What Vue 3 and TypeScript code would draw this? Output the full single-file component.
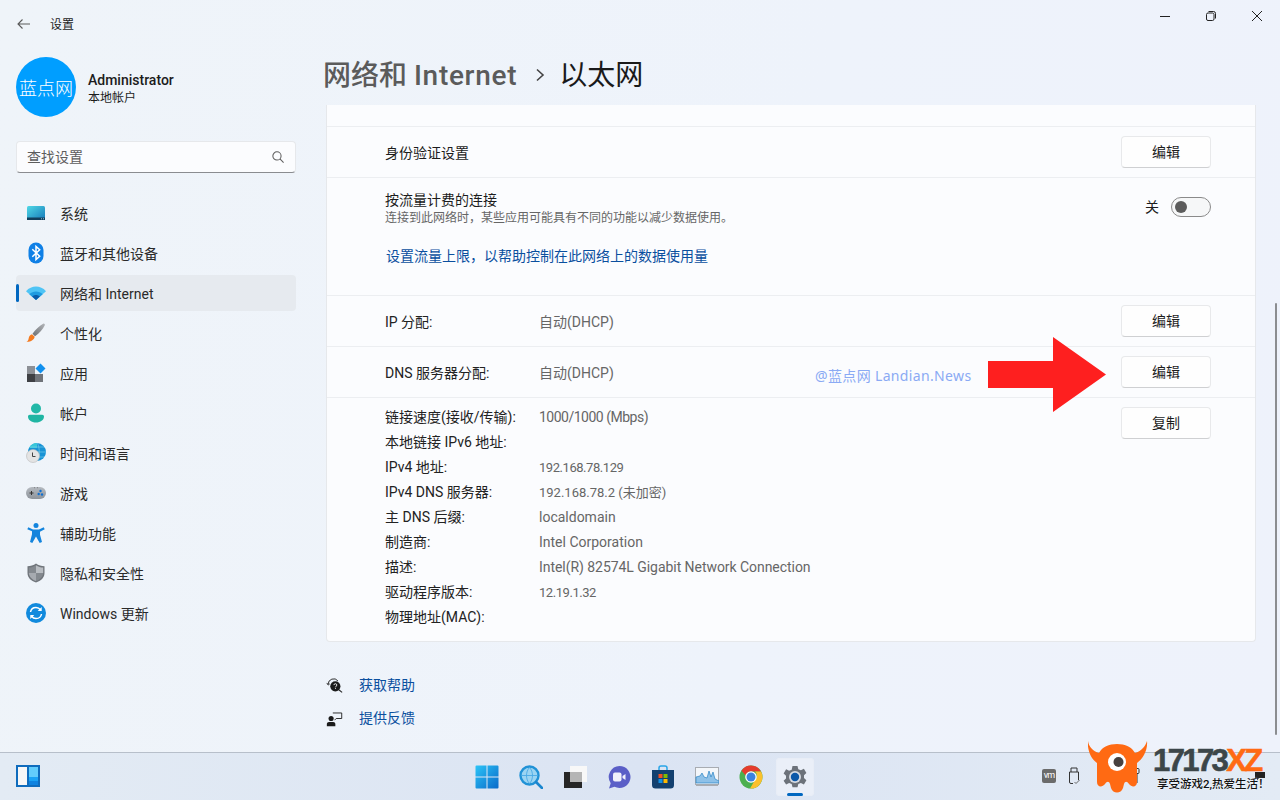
<script setup lang="ts">
const navItems = [
  { key: 'system', label: '系统' },
  { key: 'bluetooth', label: '蓝牙和其他设备' },
  { key: 'network', label: '网络和 Internet', active: true },
  { key: 'brush', label: '个性化' },
  { key: 'apps', label: '应用' },
  { key: 'account', label: '帐户' },
  { key: 'time', label: '时间和语言' },
  { key: 'game', label: '游戏' },
  { key: 'access', label: '辅助功能' },
  { key: 'privacy', label: '隐私和安全性' },
  { key: 'update', label: 'Windows 更新' },
]

const details = [
  { label: '链接速度(接收/传输):', value: '1000/1000 (Mbps)', fit: 'fit-wide' },
  { label: '本地链接 IPv6 地址:', value: '', fit: '' },
  { label: 'IPv4 地址:', value: '192.168.78.129', fit: 'fit-num' },
  { label: 'IPv4 DNS 服务器:', value: '192.168.78.2 (未加密)', fit: 'fit-small' },
  { label: '主 DNS 后缀:', value: 'localdomain', fit: '' },
  { label: '制造商:', value: 'Intel Corporation', fit: '' },
  { label: '描述:', value: 'Intel(R) 82574L Gigabit Network Connection', fit: 'fit-long' },
  { label: '驱动程序版本:', value: '12.19.1.32', fit: 'fit-num' },
  { label: '物理地址(MAC):', value: '', fit: '' },
]
</script>

<template>
  <div class="screen">
    <div class="window">
      <aside class="sidebar">
        <div class="apptitle">
          <svg class="back" width="16" height="16" viewBox="0 0 16 16" fill="none" stroke="#5a5a5a" stroke-width="1.1">
            <path d="M14 8H2.500M6.500 3.500L2 8l4.500 4.500" />
          </svg>
          <span class="apptitle-text">设置</span>
        </div>
        <div class="profile">
          <div class="avatar">蓝点网</div>
          <div class="who">
            <div class="name">Administrator</div>
            <div class="acct">本地帐户</div>
          </div>
        </div>
        <div class="search">
          <span class="search-text">查找设置</span>
          <svg width="12" height="12" viewBox="0 0 14 14" fill="none" stroke="#5c5c5c" stroke-width="1.200">
            <circle cx="5.800" cy="5.800" r="4.800" />
            <path d="M9.300 9.300L13.500 13.500" />
          </svg>
        </div>
        <nav class="nav">
          <div v-for="item in navItems" :key="item.key" class="navitem" :class="{ active: item.active }">
            <span class="navicon">
              <svg v-if="item.key === 'system'" width="20" height="20" viewBox="0 0 20 20">
                <defs>
                  <linearGradient id="sys" x1="0" y1="0" x2="1" y2="1">
                    <stop offset="0" stop-color="#4fd8e6" />
                    <stop offset="1" stop-color="#1679b9" />
                  </linearGradient>
                </defs>
                <rect x="1" y="3" width="18" height="14" rx="1.500" fill="url(#sys)" />
                <rect x="1" y="14.500" width="18" height="2.500" fill="#123f5c" />
                <rect x="15" y="15.300" width="1" height="1" fill="#8fc3dc" />
                <rect x="17" y="15.300" width="1" height="1" fill="#8fc3dc" />
              </svg>
              <svg v-else-if="item.key === 'bluetooth'" width="20" height="22" viewBox="0 0 20 22">
                <rect x="2.500" y="0.500" width="15" height="21" rx="7.500" fill="#0f80e6" />
                <path d="M6.300 7.300l7.400 6.900-3.700 3.400V4.400l3.700 3.400-7.400 6.900" fill="none" stroke="#fff" stroke-width="1.500" />
              </svg>
              <svg v-else-if="item.key === 'network'" width="20" height="14" viewBox="0 0 20 14">
                <path d="M0 5.200C5.500-1 14.500-1 20 5.200L10 14z" fill="#4fc4f5" />
                <path d="M3.300 8.200C7 4.500 13 4.500 16.700 8.200L10 14z" fill="#1f9be0" />
                <path d="M6.200 10.500c2.200-2 5.400-2 7.600 0L10 14z" fill="#0b5ba8" />
              </svg>
              <svg v-else-if="item.key === 'brush'" width="20" height="20" viewBox="0 0 20 20">
                <defs>
                  <linearGradient id="br" x1="0" y1="1" x2="1" y2="0">
                    <stop offset="0" stop-color="#6c6f73" />
                    <stop offset="1" stop-color="#b3b6ba" />
                  </linearGradient>
                </defs>
                <path d="M17.500 0.500c1 0 1.700.9 1.300 1.800C17 6.500 13 10.500 9 13.200L6.500 10.800C9.300 6.800 13.500 2.500 17.500.5z" fill="url(#br)" />
                <path d="M6 11.200l2.700 2.600c-.4 3-3.800 5.200-8.200 5 2-1 1.900-2.300 2.300-4 .4-1.800 1.600-3.200 3.200-3.600z" fill="#f47b20" />
              </svg>
              <svg v-else-if="item.key === 'apps'" width="20" height="20" viewBox="0 0 20 20">
                <rect x="1" y="3" width="8" height="8" fill="#8c9096" />
                <rect x="1" y="11" width="8" height="8" fill="#3e4044" />
                <rect x="9" y="11" width="8" height="8" fill="#70747a" />
                <path d="M14.500 0.500L19.500 5.500 14.500 10.500 9.500 5.500z" fill="#1190ee" />
              </svg>
              <svg v-else-if="item.key === 'account'" width="20" height="20" viewBox="0 0 20 20">
                <circle cx="10" cy="5.500" r="5" fill="#22b8a8" />
                <path d="M2 13.500c0-1 .8-1.800 1.800-1.800h12.400c1 0 1.800.8 1.800 1.800 0 3.500-3.600 6-8 6s-8-2.500-8-6z" fill="#1fb5a3" />
              </svg>
              <svg v-else-if="item.key === 'time'" width="20" height="20" viewBox="0 0 20 20">
                <circle cx="11" cy="9" r="9" fill="#1993d5" />
                <path d="M11 0a9 9 0 0 0-8 5h8z" fill="#38c6d8" />
                <path d="M11 0c3 3 3 15 0 18M2 9h18M4 4h14M4 14h14" fill="none" stroke="#7fd3ee" stroke-width=".6" />
                <circle cx="7" cy="13" r="6.500" fill="#e4e4e4" stroke="#b9b9b9" stroke-width=".6" />
                <path d="M6.500 9.500v4h3" fill="none" stroke="#444" stroke-width="1" />
              </svg>
              <svg v-else-if="item.key === 'game'" width="20" height="14" viewBox="0 0 20 14">
                <defs>
                  <linearGradient id="gm" x1="0" y1="0" x2="0" y2="1">
                    <stop offset="0" stop-color="#b5bac0" />
                    <stop offset="1" stop-color="#8e949b" />
                  </linearGradient>
                </defs>
                <rect x="0" y="1" width="20" height="12" rx="6" fill="url(#gm)" />
                <path d="M3.500 7h4M5.500 5v4" stroke="#333" stroke-width="1" />
                <circle cx="14.500" cy="5" r="1.200" fill="#0f6fd0" />
                <circle cx="12.700" cy="8" r="1.200" fill="#0f6fd0" />
                <circle cx="16" cy="8.500" r="1.200" fill="#0f6fd0" />
                <path d="M8 1.700h.8M11 1.700h.8" stroke="#555" stroke-width=".7" />
              </svg>
              <svg v-else-if="item.key === 'access'" width="18" height="20" viewBox="0 0 18 20">
                <circle cx="9" cy="2.500" r="2.500" fill="#1384dd" />
                <path d="M1.300 4.300L6 6.500h6l4.700-2.200 1 2-4.700 2.500v3L15 19l-2.300.9L9 13.500 5.300 19.900 3 19l2-7.700v-3L.3 6.300z" fill="#1384dd" />
              </svg>
              <svg v-else-if="item.key === 'privacy'" width="20" height="20" viewBox="0 0 20 20">
                <path d="M10 .5C12.500 2.500 15.500 3.200 18.500 3.200V10c0 4.500-3.500 8-8.500 9.500C5 18 1.500 14.500 1.500 10V3.200C4.500 3.200 7.500 2.500 10 .5z" fill="#70757b" />
                <path d="M10 2.200c2.300 1.700 4.700 2.300 7.200 2.400V10H10z" fill="#b9bdc2" />
                <path d="M10 10H2.800c.2 3.700 3 6.500 7.200 8z" fill="#a6aab0" />
                <path d="M10 2.200c-2.300 1.700-4.700 2.300-7.200 2.400V10H10zM10 10h7.200c-.2 3.700-3 6.500-7.200 8z" fill="#84898f" />
              </svg>
              <svg v-else width="20" height="20" viewBox="0 0 20 20">
                <circle cx="10" cy="10" r="10" fill="#118add" />
                <path d="M4.500 9C5 6 7.500 4.500 10 4.500c2 0 3.500 1 4.400 2.300M15.500 11c-.5 3-3 4.500-5.500 4.500-2 0-3.500-1-4.400-2.300" fill="none" stroke="#fff" stroke-width="1.500" />
                <path d="M15.700 4v4h-4zM4.300 16v-4h4z" fill="#fff" />
              </svg>
            </span>
            <span class="navlabel">{{ item.label }}</span>
          </div>
        </nav>
      </aside>

      <main class="main">
        <div class="caption">
          <span class="capbtn">
            <svg width="12" height="12" viewBox="0 0 12 12" stroke="#222" fill="none"><path d="M1 6.500h10" /></svg>
          </span>
          <span class="capbtn">
            <svg width="12" height="12" viewBox="0 0 12 12" stroke="#222" fill="none"><rect x="1.500" y="3" width="7.500" height="7.500" rx="1.500" /><path d="M3.500 1.500h5a2 2 0 0 1 2 2v5" /></svg>
          </span>
          <span class="capbtn">
            <svg width="12" height="12" viewBox="0 0 12 12" stroke="#222" fill="none"><path d="M1 1l10 10M11 1L1 11" /></svg>
          </span>
        </div>
        <h1 class="crumb">
          <span class="crumb-parent">网络和 <span class="crumb-en">Internet</span></span>
          <svg class="crumb-sep" width="10" height="14" viewBox="0 0 10 14" fill="none" stroke="#444" stroke-width="1.600"><path d="M2 1.500l6 5.500-6 5.500" /></svg>
          <span class="crumb-current">以太网</span>
        </h1>

        <section class="card">
          <div class="row row-top"></div>
          <div class="row row-line">
            <span class="title">身份验证设置</span>
            <button class="btn">编辑</button>
          </div>
          <div class="row row-meter">
            <div class="meter-text">
              <div class="title">按流量计费的连接</div>
              <div class="sub">连接到此网络时，某些应用可能具有不同的功能以减少数据使用。</div>
              <a class="link limit">设置流量上限，以帮助控制在此网络上的数据使用量</a>
            </div>
            <div class="toggle-wrap">
              <span class="title">关</span>
              <span class="toggle"><i></i></span>
            </div>
          </div>
          <div class="row row-line">
            <span class="pair"><span class="label">IP 分配:</span><span class="value">自动(DHCP)</span></span>
            <button class="btn">编辑</button>
          </div>
          <div class="row row-line">
            <span class="pair"><span class="label">DNS 服务器分配:</span><span class="value">自动(DHCP)</span></span>
            <button class="btn">编辑</button>
          </div>
          <div class="row row-details">
            <div class="details">
              <div v-for="d in details" :key="d.label" class="detail">
                <span class="label">{{ d.label }}</span><span class="value" :class="d.fit">{{ d.value }}</span>
              </div>
            </div>
            <button class="btn">复制</button>
          </div>
        </section>

        <div class="help">
          <div class="helpline">
            <svg width="17" height="17" viewBox="0 0 20 20">
              <path d="M2.500 8.500A6.500 6.500 0 0 1 14 4.500" fill="none" stroke="#222" stroke-width="1.100" />
              <path d="M1 7l1.500 2.500L4.500 8" fill="none" stroke="#222" stroke-width="1" />
              <circle cx="11" cy="11" r="6" fill="#1b1b1b" />
              <path d="M15 15l4 3" stroke="#222" stroke-width="1.200" />
              <path d="M9.300 9.500c0-2.200 3.500-2.200 3.500 0 0 1.300-1.700 1.300-1.700 2.700" fill="none" stroke="#fff" stroke-width="1" />
              <rect x="10.600" y="13" width="1" height="1" fill="#fff" />
            </svg>
            <a class="link">获取帮助</a>
          </div>
          <div class="helpline">
            <svg width="17" height="17" viewBox="0 0 20 20">
              <circle cx="6" cy="10" r="3" fill="#1b1b1b" />
              <path d="M1 19v-2.500C1 15 2.200 14 3.500 14h5c1.300 0 2.500 1 2.500 2.500V19z" fill="#1b1b1b" />
              <path d="M8 3.500h10.500V10H12l-2 2" fill="none" stroke="#222" stroke-width="1.100" />
            </svg>
            <a class="link">提供反馈</a>
          </div>
        </div>
      </main>
    </div>

    <footer class="taskbar">
      <div class="widget">
        <svg width="24" height="22" viewBox="0 0 24 22">
          <rect width="24" height="22" fill="#0f6cbd" />
          <rect x="2" y="2" width="9" height="18" fill="#f7f7f7" />
          <rect x="13" y="2" width="9" height="10" fill="#62cdfc" />
          <rect x="13" y="12" width="9" height="4" fill="#1aa3f5" />
          <rect x="13" y="16" width="9" height="4" fill="#0f83e0" />
        </svg>
      </div>
      <div class="apps">
        <span class="tb">
          <svg width="24" height="24" viewBox="0 0 24 24">
            <defs>
              <linearGradient id="win" x1="0" y1="0" x2="1" y2="1">
                <stop offset="0" stop-color="#2cc4f7" />
                <stop offset="1" stop-color="#0969c9" />
              </linearGradient>
            </defs>
            <path d="M.5 1.500a1 1 0 0 1 1-1h10v11H.5zM12.500.5h10a1 1 0 0 1 1 1v10h-11zM.5 12.500h11v11h-10a1 1 0 0 1-1-1zM12.500 12.500h11v10a1 1 0 0 1-1 1h-10z" fill="url(#win)" />
          </svg>
        </span>
        <span class="tb">
          <svg width="24" height="24" viewBox="0 0 24 24">
            <circle cx="10.500" cy="10.500" r="9" fill="#9bd4f2" stroke="#2192d6" stroke-width="2.400" />
            <path d="M2.500 10.500h16M10.500 2.500c-4 4-4 12 0 16M10.500 2.500c4 4 4 12 0 16" fill="none" stroke="#4aa9e4" stroke-width=".9" />
            <path d="M17 17l6 6" stroke="#1a86cf" stroke-width="2.600" stroke-linecap="round" />
          </svg>
        </span>
        <span class="tb">
          <svg width="24" height="24" viewBox="0 0 24 24">
            <rect x="7" y="1" width="17" height="16" fill="#f8f8f8" />
            <rect x="1" y="7" width="18" height="16" fill="#262626" />
            <rect x="7" y="7" width="12" height="10" fill="#b5b5b5" />
          </svg>
        </span>
        <span class="tb">
          <svg width="24" height="24" viewBox="0 0 24 24">
            <path d="M12.500 1a11 11 0 1 1-5 20.800L2 23.500l1.700-5.300A11 11 0 0 1 12.500 1z" fill="#5b5fc7" />
            <rect x="6" y="7.500" width="8.500" height="9" rx="2" fill="#f1f1fb" />
            <path d="M15.500 11l3-2v6l-3-2z" fill="#f1f1fb" />
          </svg>
        </span>
        <span class="tb">
          <svg width="24" height="24" viewBox="0 0 24 24">
            <path d="M8 5V3a2 2 0 0 1 2-2h4a2 2 0 0 1 2 2v2" fill="none" stroke="#2aa5e8" stroke-width="1.500" />
            <path d="M1 5h22v15a3.500 3.500 0 0 1-3.500 3.500h-15A3.500 3.500 0 0 1 1 20z" fill="#13406f" />
            <rect x="7.500" y="9" width="4" height="4" fill="#f25022" />
            <rect x="12.500" y="9" width="4" height="4" fill="#7fba00" />
            <rect x="7.500" y="14" width="4" height="4" fill="#1192e8" />
            <rect x="12.500" y="14" width="4" height="4" fill="#ffb900" />
          </svg>
        </span>
        <span class="tb">
          <svg width="24" height="20" viewBox="0 0 24 20">
            <rect x=".5" y=".5" width="23" height="17" fill="#f3f6fa" stroke="#a8acb2" />
            <path d="M1 16v-6l4-1 2-3 2 4 3 1 2-7 2 6 2-5 2 7 4 2v2z" fill="#8ec1e8" stroke="#2a84c6" stroke-width=".7" />
            <rect x="1" y="17" width="22" height="2" fill="#a8acb2" />
          </svg>
        </span>
        <span class="tb">
          <svg width="24" height="24" viewBox="0 0 24 24">
            <circle cx="12" cy="12" r="11.500" fill="#4caf50" />
            <path d="M12 .5A11.500 11.500 0 0 1 22 6.500H12a5.500 5.500 0 0 0-5.300 4L2.500 5.800A11.500 11.500 0 0 1 12 .5z" fill="#e53c2e" />
            <path d="M22 6.500A11.500 11.500 0 0 1 11 23.500l5-8.500a5.500 5.500 0 0 0 0-8.500z" fill="#fbc02d" />
            <circle cx="12" cy="12" r="5.800" fill="#fff" />
            <circle cx="12" cy="12" r="4.500" fill="#3b82e0" />
          </svg>
        </span>
        <span class="tb tb-active">
          <svg width="24" height="24" viewBox="0 0 24 24">
            <path d="M9.500 1h5l.8 3.200 2.600 1.100 3-1.600 2.500 4.300-2.400 2.200v2.800l2.400 2.200-2.500 4.300-3-1.600-2.600 1.100-.8 3.200h-5l-.8-3.200-2.600-1.100-3 1.600L.6 15.700 3 13.500v-2.800L.6 8.500l2.500-4.300 3 1.600 2.600-1.100z" fill="#6c727a" />
            <circle cx="12" cy="12" r="6" fill="#d5dae2" />
            <circle cx="12" cy="12" r="4.200" fill="#0c58a8" />
          </svg>
          <i class="tb-dot"></i>
        </span>
      </div>
      <div class="tray">
        <span class="vm">vm</span>
        <svg width="12" height="18" viewBox="0 0 12 18" fill="none" stroke="#333" stroke-width="1">
          <path d="M3 5V1h6v4M1.500 5h9v8M1.500 5v10a1.500 1.500 0 0 0 1.500 1.500h2" />
          <path d="M6.500 15l1.500 1.500 3.500-3.500" stroke="#666" />
        </svg>
        <svg class="tray-cable" width="6" height="16" viewBox="0 0 6 16" fill="none" stroke="#333" stroke-width="1">
          <rect x="1" y=".5" width="4" height="5" rx="1" />
          <path d="M3 5.500V15" />
        </svg>
        <svg class="tray-note" width="10" height="10" viewBox="0 0 10 10">
          <path d="M0 1h10v6H4L2 9.500V7H0z" fill="#222" />
        </svg>
      </div>
    </footer>

    <div class="scrollbar"></div>

    <div class="wm">@蓝点网 Landian.News</div>

    <svg class="arrow" width="118" height="75" viewBox="0 0 118 75">
      <path d="M0 24H65V0L118 37.500 65 75V51H0z" fill="#fe1f1f" />
    </svg>

    <div class="brand">
      <svg width="60" height="54" viewBox="0 0 60 54">
        <path d="M0 1C1 7 5 11 11 13C14 7 21 4 29 4C37 4 44 7 47 13C53 11 57 7 59 1C60 10 55 19 49 23L49 42C49 47 44 48 41 44C39 41 37 41 36 44L35 48C33 54 25 54 23 48L22 44C21 41 19 41 17 44C14 48 9 47 9 42L9 23C3 19-1 10 0 1Z" fill="#ff6a13" />
        <circle cx="29" cy="22" r="9" fill="#fff" />
        <circle cx="30.500" cy="22" r="5" fill="#47413f" />
      </svg>
      <div class="brand-text">
        <div class="brand-name">17173<span>XZ</span></div>
        <div class="brand-sub">享受游戏2,热爱生活！</div>
      </div>
    </div>
  </div>
</template>

<style>
html, body { margin: 0; padding: 0; }
</style>

<style scoped>
.screen {
  position: relative;
  width: 1280px;
  height: 800px;
  overflow: hidden;
  display: flex;
  flex-direction: column;
  font-family: Roboto, "Noto Sans CJK SC", sans-serif;
  font-size: 14px;
  color: #1c1c1c;
  background: #eef3fa;
}
.window {
  height: 752px;
  display: flex;
  background: linear-gradient(100deg, #eff4f9 0%, #eef3fb 60%, #eef2fb 100%);
}
.sidebar {
  width: 280px;
  padding: 0 16px;
  flex: none;
}
.apptitle {
  height: 48px;
  display: flex;
  align-items: center;
  font-size: 12px;
}
.apptitle-text { padding-bottom: 2px; }
.back { margin-right: 18px; }
.profile {
  margin-top: 9px;
  height: 60px;
  display: flex;
  align-items: center;
}
.avatar {
  width: 60px;
  height: 60px;
  border-radius: 50%;
  background: #009eff;
  color: #fff;
  font-size: 18px;
  font-weight: 300;
  display: flex;
  align-items: center;
  justify-content: center;
  white-space: nowrap;
}
.who { margin-left: 12px; padding-top: 3px; }
.name { font-size: 14px; font-weight: 500; line-height: 18px; }
.acct { font-size: 12px; line-height: 16px; margin-top: 1px; }
.search {
  margin-top: 24px;
  height: 32px;
  box-sizing: border-box;
  background: #fbfcfe;
  border: 1px solid #e6e8eb;
  border-bottom-color: #8a8c90;
  border-radius: 4px;
  padding: 0 11px 0 10px;
  display: flex;
  align-items: center;
  justify-content: space-between;
  color: #5d5d5d;
}
.search-text { padding-bottom: 2px; }
.nav {
  margin-top: 22px;
  display: flex;
  flex-direction: column;
  gap: 4px;
}
.navitem {
  position: relative;
  height: 36px;
  border-radius: 4px;
  display: flex;
  align-items: center;
  color: #2a2a2a;
}
.navitem.active { background: #e6eaef; }
.navitem.active::before {
  content: "";
  position: absolute;
  left: 0;
  top: 9px;
  width: 3px;
  height: 18px;
  border-radius: 2px;
  background: #0067c0;
}
.navicon {
  width: 20px;
  height: 24px;
  margin: 0 14px 0 10px;
  display: flex;
  align-items: center;
  justify-content: center;
}
.navlabel { line-height: 20px; padding-top: 2px; }
.main {
  flex: 1;
  padding: 0 24px 0 14px;
  min-width: 0;
}
.caption {
  height: 32px;
  margin-right: -24px;
  display: flex;
  justify-content: flex-end;
}
.capbtn {
  width: 46px;
  height: 32px;
  display: flex;
  align-items: center;
  justify-content: center;
}
.crumb {
  margin: 0 0 0 -3px;
  height: 73px;
  padding-top: 24px;
  box-sizing: border-box;
  display: flex;
  align-items: flex-start;
  font-size: 28px;
  font-weight: 400;
  line-height: 40px;
  white-space: nowrap;
}
.crumb-parent { color: #5b5b5b; font-weight: 500; }
.crumb-en { letter-spacing: 0.7px; }
.crumb-sep { margin: 12px 14px 0 18px; }
.crumb-current { color: #1a1a1a; }
.card {
  box-sizing: border-box;
  height: 537px;
  background: #fbfcfe;
  border: 1px solid #e6e8eb;
  border-top: none;
  border-radius: 0 0 4px 4px;
}
.row {
  box-sizing: border-box;
  border-bottom: 1px solid #eceef1;
  padding: 0 44px 0 58px;
}
.row:last-child { border-bottom: none; }
.row-top { height: 22px; }
.row-line {
  height: 51px;
  display: flex;
  align-items: center;
  justify-content: space-between;
}
.row-meter {
  height: 118px;
  display: flex;
  justify-content: space-between;
}
.title { line-height: 20px; font-size: 14px; }
.row-line > .title { padding-top: 2px; }
.meter-text { padding-top: 12px; }
.sub { font-size: 12px; line-height: 16px; color: #666; }
.link { color: #0a4f9e; font-size: 14px; line-height: 20px; }
.limit { display: block; margin: 20px 0 0 1px; }
.toggle-wrap {
  display: flex;
  align-items: center;
  gap: 12px;
  height: 20px;
  margin-top: 19px;
}
.toggle {
  box-sizing: border-box;
  width: 40px;
  height: 20px;
  border: 1px solid #8a8a8a;
  border-radius: 10px;
  background: #f6f7f8;
  display: flex;
  align-items: center;
  padding-left: 3px;
}
.toggle i {
  width: 12px;
  height: 12px;
  border-radius: 50%;
  background: #5c5c5c;
}
.btn {
  box-sizing: border-box;
  width: 90px;
  height: 32px;
  padding: 0 0 2px;
  background: #fefefe;
  border: 1px solid #e8e9eb;
  border-bottom-color: #cfd0d2;
  border-radius: 4px;
  font: inherit;
  font-size: 14px;
  color: #1c1c1c;
}
.pair { display: flex; align-items: baseline; line-height: 20px; padding-top: 2px; }
.label { width: 154px; flex: none; font-size: 14px; color: #222; }
.value { color: #666; font-size: 14px; }
.fit-wide { letter-spacing: -0.5px; }
.fit-long { letter-spacing: -0.05px; }
.fit-num { font-size: 13px; letter-spacing: -0.45px; }
.fit-small { font-size: 13px; }
.row-details {
  height: 244px;
  display: flex;
  justify-content: space-between;
  align-items: flex-start;
  padding-top: 7px;
}
.row-details .btn { margin-top: 2px; }
.detail { display: flex; height: 25px; line-height: 25px; align-items: baseline; }
.help {
  margin-top: 33px;
  display: flex;
  flex-direction: column;
  gap: 13px;
}
.helpline {
  height: 20px;
  display: flex;
  align-items: center;
  gap: 16px;
}
.taskbar {
  position: relative;
  height: 48px;
  box-sizing: border-box;
  border-top: 1px solid #b7bfca;
  background: linear-gradient(90deg, #e3ebf4 0%, #dbe4f3 50%, #e3ebf5 100%);
  display: flex;
  align-items: center;
  justify-content: center;
}
.widget { position: absolute; left: 16px; top: 12px; }
.apps { display: flex; gap: 6px; padding-left: 2px; }
.tb {
  position: relative;
  width: 38px;
  height: 38px;
  border-radius: 4px;
  display: flex;
  align-items: center;
  justify-content: center;
}
.tb-active { background: #eaeff8; box-shadow: 0 0 0 1px #e8edf6 inset; }
.tb-dot {
  position: absolute;
  left: 11px;
  bottom: 0;
  width: 16px;
  height: 3px;
  border-radius: 2px;
  background: #0067c0;
}
.tray {
  position: absolute;
  left: 1042px;
  top: 14px;
  display: flex;
  align-items: center;
  gap: 12px;
}
.tray-cable { margin-left: 42px; }
.tray-note { margin-left: 103px; }
.vm {
  width: 14px;
  height: 14px;
  background: #6b6b6b;
  border-radius: 2px;
  color: #fff;
  font-size: 9px;
  line-height: 13px;
  text-align: center;
  letter-spacing: -1px;
}
.scrollbar {
  position: absolute;
  left: 1275px;
  top: 303px;
  width: 2px;
  height: 432px;
  border-radius: 1px;
  background: #8b8d90;
}
.wm {
  position: absolute;
  left: 815px;
  top: 366px;
  color: #8aaaf4;
  font-family: "Noto Sans", "Noto Sans CJK SC", sans-serif;
  font-size: 14px;
  line-height: 20px;
  letter-spacing: 0.35px;
  white-space: nowrap;
}
.arrow { position: absolute; left: 988px; top: 337px; }
.brand {
  position: absolute;
  left: 1088px;
  top: 740px;
  display: flex;
}
.brand-text { margin-left: 5px; padding-top: 7px; }
.brand-name {
  font-family: "Liberation Sans", sans-serif;
  font-weight: 700;
  font-size: 31px;
  line-height: 28px;
  color: #3c4649;
  white-space: nowrap;
  letter-spacing: -2.6px;
  -webkit-text-stroke: 0.6px currentColor;
}
.brand-name span { color: #ff6a13; }
.brand-sub {
  margin: 1px 0 0 4px;
  font-size: 11.5px;
  font-weight: 500;
  line-height: 16px;
  color: #111;
  white-space: nowrap;
  text-shadow: 0 0 2px #fff;
}
</style>
